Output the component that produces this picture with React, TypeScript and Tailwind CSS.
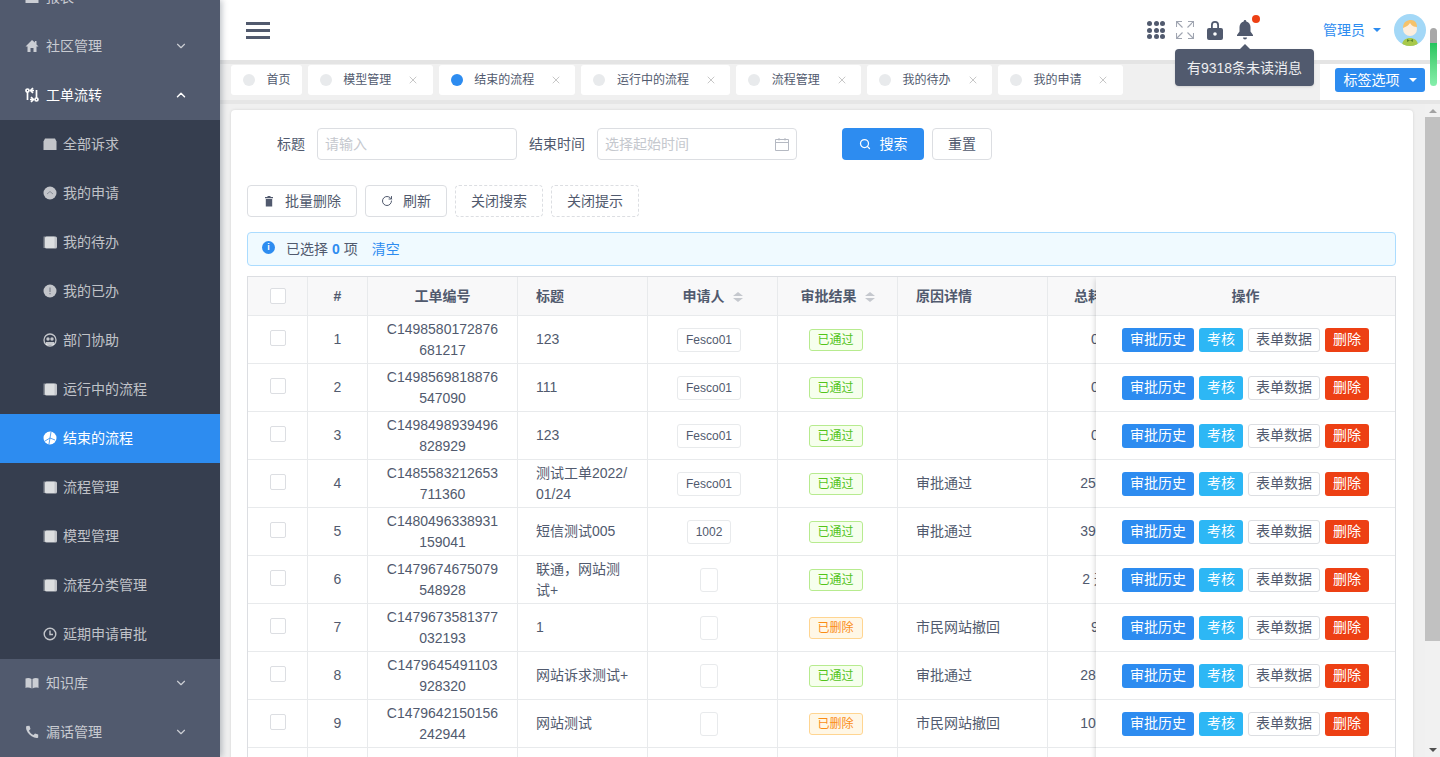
import { ChevronDown, ChevronUp, RotateCw, Search, X } from "lucide-react";
import type { ReactNode } from "react";

const ic = "w-4 h-4 shrink-0";

// sidebar glyphs, all on a 16 grid
const icons: Record<string, ReactNode> = {
  home: <path d="M8 2 1.500 8.500H3.500V14h3v-4h3v4h3V8.500h2l-2-2V3h-1.600v1.600z" />,
  flow: (
    <g fill="none" stroke="currentColor" strokeWidth="1.700">
      <path d="M3.500 5v8M12.500 3v8" />
      <path d="M9 1 6.500 3.500 9 6M6.500 3.500H10M7 10l2.500 2.500L7 15M9.500 12.500H6" />
      <circle cx="3.500" cy="3.500" r="1.500" />
      <circle cx="12.500" cy="12.500" r="1.500" />
    </g>
  ),
  box: <path d="M3 2.500h10l1.500 3V14H1.500V5.500z" />,
  up: (
    <>
      <circle cx="8" cy="8" r="6.500" />
      <path d="m5 9 3-2.500L11 9" fill="none" stroke="#363e4f" strokeWidth=".7" opacity=".6" />
    </>
  ),
  copy: (
    <>
      <path d="M1.500 2.500h11v11.500h-11z" opacity=".6" />
      <rect x="3" y="2.500" width="12" height="12" rx="1.500" />
    </>
  ),
  info: (
    <>
      <circle cx="8" cy="8" r="6.500" />
      <path d="M7.500 4.500h1v4.500h-1zM7.500 10h1v1.200h-1z" fill="#363e4f" opacity=".6" />
    </>
  ),
  team: (
    <>
      <circle cx="8" cy="8" r="6" fill="none" stroke="currentColor" strokeWidth="1.300" />
      <circle cx="6" cy="7" r="1.700" />
      <circle cx="10" cy="7" r="1.700" />
      <path d="M4 13V10h8v3z" />
    </>
  ),
  aperture: (
    <>
      <circle cx="8" cy="8" r="6.500" />
      <path d="M8 8 3 11M8 8l1-6M8 8l5 2M8 8l-1 6" stroke="#2d8cf0" strokeWidth=".8" />
    </>
  ),
  clock: (
    <g fill="none" stroke="currentColor" strokeWidth="1.400">
      <circle cx="8" cy="8" r="5.800" />
      <path d="M8 4.500V8.500H11" />
    </g>
  ),
  book: <path d="M1.500 3.500C3.500 2.500 6 2.800 7.500 4v9.500C6 12.500 3.500 12.300 1.500 13zM14.500 3.500C12.500 2.500 10 2.800 8.500 4v9.500c1.500-1 4-1.200 6-.5z" />,
  phone: <path d="M2.500 2 5.500 1.800 6.500 5 5 6.500c.8 2 2.300 3.500 4.500 4.500L11 9.500l3.200 1v3c-1 .8-2.500.5-4 0C6.500 12.200 3.800 9.500 2.500 6c-.5-1.500-.6-3 0-4z" />,
};

function MenuIcon({ name }: { name: string }) {
  return (
    <svg viewBox="0 0 16 16" fill="currentColor" className={ic}>
      {icons[name]}
    </svg>
  );
}

function TopMenu({ icon, label, open, active, lift }: { icon: string; label: string; open?: boolean; active?: boolean; lift?: boolean }) {
  return (
    <div className={`flex h-[49px] items-center pl-[24px] pr-[32px] text-sm ${lift ? "pb-[2px]" : ""} ${active ? "text-white" : "text-white/70"}`}>
      <MenuIcon name={icon} />
      <span className="ml-[6px] flex-1">{label}</span>
      {open ? <ChevronUp className="w-3.5 h-3.5" strokeWidth={2.500} /> : <ChevronDown className="w-3.5 h-3.5" strokeWidth={2} />}
    </div>
  );
}

const subMenus = [
  ["box", "全部诉求"],
  ["up", "我的申请"],
  ["copy", "我的待办"],
  ["info", "我的已办"],
  ["team", "部门协助"],
  ["copy", "运行中的流程"],
  ["aperture", "结束的流程"],
  ["copy", "流程管理"],
  ["copy", "模型管理"],
  ["copy", "流程分类管理"],
  ["clock", "延期申请审批"],
];

function Sidebar() {
  return (
    <aside className="z-10 h-full w-[220px] shrink-0 overflow-hidden bg-[#515a6e] shadow-[2px_0_6px_rgba(0,21,41,0.25)]">
      <div className="-mt-[28px]">
        <TopMenu icon="box" label="报表" />
        <TopMenu icon="home" label="社区管理" />
        <TopMenu icon="flow" label="工单流转" open active />
        <div className="mt-px bg-[#363e4f]">
          {subMenus.map(([icon, label]) => {
            const on = label === "结束的流程";
            return (
              <div key={label} className={`flex h-[49px] items-center gap-[5px] pb-[2px] pl-[42px] text-sm ${on ? "bg-[#2d8cf0] text-white" : "text-white/70"}`}>
                <MenuIcon name={icon} />
                {label}
              </div>
            );
          })}
        </div>
        <TopMenu icon="book" label="知识库" lift />
        <TopMenu icon="phone" label="漏话管理" lift />
      </div>
    </aside>
  );
}

function Header() {
  return (
    <header className="flex h-[60px] shrink-0 items-center bg-white pl-[26px] text-[#515a6e]">
      <div className="flex w-6 flex-col gap-1">
        <span className="h-[3px] bg-[#515a6e]" />
        <span className="h-[3px] bg-[#515a6e]" />
        <span className="h-[3px] bg-[#515a6e]" />
      </div>
      <div className="ml-auto flex items-center">
        <div className="grid grid-cols-3 gap-[1.500px]">
          {Array.from({ length: 9 }).map((_, i) => (
            <span key={i} className="h-[5px] w-[5px] rounded-full bg-[#515a6e]" />
          ))}
        </div>
        <svg viewBox="0 0 18 18" fill="none" stroke="#a0a5b1" strokeWidth="1.100" className="ml-[11px] h-[18px] w-[18px]">
          <path d="M.5 6V.5H6M12 .5h5.500V6M17.500 12v5.500H12M6 17.500H.5V12M.5.5l6 6M17.500.5l-6 6M17.500 17.500l-6-6M.5 17.500l6-6" />
        </svg>
        <svg viewBox="0 0 16 20" fill="#515a6e" className="ml-[13px] h-5 w-4">
          <path fillRule="evenodd" d="M4 8V5a4 4 0 0 1 8 0v3h2a2 2 0 0 1 2 2v8a2 2 0 0 1-2 2H2a2 2 0 0 1-2-2V10a2 2 0 0 1 2-2zm1.800 0h4.400V5a2.200 2.200 0 0 0-4.400 0zM8 12.200a1.800 1.800 0 1 0 0 3.600 1.800 1.800 0 0 0 0-3.600z" />
        </svg>
        <div className="relative ml-[14px] h-5 w-4">
          <svg viewBox="0 0 16 20" fill="#515a6e" className="h-5 w-4">
            <path d="M8 0c.8 0 1.300.6 1.300 1.400C11.800 2 13.500 4.200 13.500 7v4.500L16 15v1H0v-1l2.500-3.500V7c0-2.800 1.700-5 4.200-5.600C6.700.6 7.200 0 8 0zM6 17.500h4a2 2 0 0 1-4 0z" />
          </svg>
          <span className="absolute -right-[7px] -top-[5px] h-2 w-2 rounded-full bg-[#ed4014]" />
        </div>
        <span className="ml-[70px] text-sm text-[#2d8cf0]">管理员</span>
        <span className="ml-2 h-0 w-0 border-x-[4px] border-t-[4px] border-x-transparent border-t-[#2d8cf0]" />
        <svg viewBox="0 0 32 32" className="ml-[13px] mr-[14px] h-8 w-8">
          <clipPath id="face"><circle cx="16" cy="16" r="16" /></clipPath>
          <g clipPath="url(#face)">
            <rect width="32" height="32" fill="#a3d8f7" />
            <path d="M8 32c0-6 4-8 8-8s8 2 8 8z" fill="#a8c94a" />
            <circle cx="16" cy="15" r="7" fill="#fdeede" />
            <path d="M9 14c0-6 4-8 8-8 4 0 6 3 6 7-3 0-5-1-7-4-1 2-4 4-7 5z" fill="#f5c26b" />
            <path d="M13 25l3 1.500 3-1.500v3l-3-1.500-3 1.500z" fill="#5f8a2b" />
          </g>
        </svg>
      </div>
    </header>
  );
}

const tabs = ["首页", "模型管理", "结束的流程", "运行中的流程", "流程管理", "我的待办", "我的申请"];

function TabBar() {
  return (
    <div className="flex h-[40px] shrink-0 border-t-4 border-[#e4e4e4] bg-[#f0f0f0]">
      <div className="flex h-[36px] flex-1 gap-[6px] pl-[11px] pt-px">
        {tabs.map((t, i) => (
          <div key={t} className="flex h-[30px] items-center rounded-[3px] bg-white pl-3 text-xs text-[#515a6e]">
            <span className={`h-3 w-3 rounded-full ${t === "结束的流程" ? "bg-[#2d8cf0]" : "bg-[#e8eaec]"}`} />
            <span className="ml-[11.5px]">{t}</span>
            {i > 0 ? <X className="ml-4 mr-[13.3px] h-3 w-3 text-[#a8a8a8]" strokeWidth={1.300} /> : <span className="w-[11.3px]" />}
          </div>
        ))}
      </div>
      <div className="flex w-[120px] items-start bg-white pl-[15px] pt-[4px]">
        <button className="flex h-6 w-[90px] items-center justify-center gap-[9px] rounded-[3px] bg-[#2d8cf0] text-sm text-white">
          标签选项
          <span className="h-0 w-0 border-x-[4px] border-t-[4px] border-x-transparent border-t-white" />
        </button>
      </div>
    </div>
  );
}

const fieldCls = "flex h-8 w-[200px] items-center justify-between rounded border border-[#dcdee2] bg-white px-[7px] text-sm text-[#c5c8ce]";

function Filters() {
  return (
    <div className="flex h-8 items-center text-sm text-[#515a6e]">
      <span className="ml-[30px] mr-3">标题</span>
      <div className={fieldCls}>请输入</div>
      <span className="mx-3">结束时间</span>
      <div className={fieldCls}>
        选择起始时间
        <svg viewBox="0 0 14 14" fill="none" stroke="#b5b9c2" className="h-3.5 w-3.5">
          <path d="M.5 2.500h13v11H.5zM.5 5.500h13M4 1v2.500M10 1v2.500" />
        </svg>
      </div>
      <button className="ml-[45px] flex h-8 w-[82px] items-center justify-center gap-[9px] rounded bg-[#2d8cf0] text-white">
        <Search className="h-3 w-3" strokeWidth={2.500} />
        搜索
      </button>
      <button className="ml-2 h-8 w-[60px] rounded border border-[#dcdee2]">重置</button>
    </div>
  );
}

function Toolbar() {
  const dashed = "h-8 w-[88px] rounded border border-dashed border-[#dcdee2] pb-px";
  return (
    <div className="mt-[25px] flex gap-2 text-sm text-[#515a6e]">
      <button className="flex h-8 w-[110px] items-center justify-center gap-[10px] rounded border border-[#dcdee2] pb-px">
        <svg viewBox="0 0 12 12" fill="#515a6e" className="h-3 w-3">
          <path d="M4.500 1h3v1H10v1.200H2V2h2.500zM2.800 4h6.400v7.500H2.800z" />
        </svg>
        批量删除
      </button>
      <button className="flex h-8 w-[82px] items-center justify-center gap-[10px] rounded border border-[#dcdee2] pb-px">
        <RotateCw className="h-3 w-3" strokeWidth={2} />
        刷新
      </button>
      <button className={dashed}>关闭搜索</button>
      <button className={dashed}>关闭提示</button>
    </div>
  );
}

function Notice() {
  return (
    <div className="mt-[15px] flex h-[34px] items-center rounded border border-[#abdcff] bg-[#f0faff] pl-[14px] text-sm text-[#515a6e]">
      <span className="-mt-1 flex h-[13px] w-[13px] items-center justify-center rounded-full bg-[#2d8cf0] text-[9px] font-bold leading-none text-white">i</span>
      <span className="ml-[11px]">已选择</span>
      <span className="mx-1 font-bold text-[#2d8cf0]">0</span>
      <span>项</span>
      <span className="ml-[14px] text-[#2d8cf0]">清空</span>
    </div>
  );
}

const rows = [
  ["C1498580172876681217", "123", "Fesco01", "已通过", "", "0"],
  ["C1498569818876547090", "111", "Fesco01", "已通过", "", "0"],
  ["C1498498939496828929", "123", "Fesco01", "已通过", "", "0"],
  ["C1485583212653711360", "测试工单2022/01/24", "Fesco01", "已通过", "审批通过", "25天"],
  ["C1480496338931159041", "短信测试005", "1002", "已通过", "审批通过", "39天"],
  ["C1479674675079548928", "联通，网站测试+", "", "已通过", "", "2 天"],
  ["C1479673581377032193", "1", "", "已删除", "市民网站撤回", "9"],
  ["C1479645491103928320", "网站诉求测试+", "", "已通过", "审批通过", "28天"],
  ["C1479642150156242944", "网站测试", "", "已删除", "市民网站撤回", "10天"],
  ["C1479410689440", "测试工单联系", "", "已通过", "", "5"],
];

function Check({ row }: { row?: boolean }) {
  return <span className={`relative inline-block h-4 w-4 rounded-[2px] border border-[#dcdee2] bg-white align-middle ${row ? "-top-[2px]" : "-top-px"}`} />;
}

function Sort() {
  return (
    <span className="ml-2 inline-flex flex-col gap-[2px] align-middle">
      <span className="h-0 w-0 border-x-[5px] border-b-[4px] border-x-transparent border-b-[#c5c8ce]" />
      <span className="h-0 w-0 border-x-[5px] border-t-[4px] border-x-transparent border-t-[#c5c8ce]" />
    </span>
  );
}

function Status({ text }: { text: string }) {
  const tone = text === "已通过" ? "border-[#b7eb8f] bg-[#f6ffed] text-[#52c41a]" : "border-[#ffd591] bg-[#fff7e6] text-[#fa8c16]";
  return <span className={`-ml-1 inline-block h-[22px] w-[54px] rounded-[3px] border text-center align-middle text-xs leading-5 ${tone}`}>{text}</span>;
}

function Applicant({ name }: { name: string }) {
  return (
    <span className="-ml-[7px] inline-block h-6 min-w-[18px] rounded-[3px] border border-[#e8eaec] bg-white px-2 align-middle text-xs leading-[23px]">
      {name}
    </span>
  );
}

const th = "border-r border-b border-[#e8eaec] bg-[#f8f8f9] font-bold";
const td = "border-r border-b border-[#e8eaec] px-[18px] leading-[21px]";

function DataTable() {
  return (
    <div className="relative mt-[10px] h-[481px] overflow-hidden border-l border-t border-r border-[#dcdee2] text-sm text-[#515a6e]">
      <table className="w-[1200px] table-fixed border-separate border-spacing-0">
        <colgroup>
          <col className="w-[60px]" />
          <col className="w-[60px]" />
          <col className="w-[150px]" />
          <col className="w-[130px]" />
          <col className="w-[130px]" />
          <col className="w-[120px]" />
          <col className="w-[150px]" />
          <col className="w-[95px]" />
          <col />
        </colgroup>
        <thead>
          <tr className="h-[39px]">
            <th className={th}><Check /></th>
            <th className={th}>#</th>
            <th className={th}>工单编号</th>
            <th className={`${th} px-[18px] text-left`}>标题</th>
            <th className={th}>申请人<Sort /></th>
            <th className={th}>审批结果<Sort /></th>
            <th className={`${th} px-[18px] text-left`}>原因详情</th>
            <th className={`${th} whitespace-nowrap`}>总耗时</th>
            <th className={th} />
          </tr>
        </thead>
        <tbody>
          {rows.map((r, i) => (
            <tr key={r[0]} className="h-[48px]">
              <td className={`${td} text-center`}><Check row /></td>
              <td className={`${td} text-center`}>{i + 1}</td>
              <td className={`${td} break-all text-center`}>{r[0]}</td>
              <td className={`${td} break-all`}>{r[1]}</td>
              <td className={`${td} text-center`}><Applicant name={r[2]} /></td>
              <td className={`${td} text-center`}><Status text={r[3]} /></td>
              <td className={td}>{r[4]}</td>
              <td className={`${td} whitespace-nowrap !px-0 text-center`}>{r[5]}</td>
              <td className={td} />
            </tr>
          ))}
        </tbody>
      </table>
      {/* fixed right column */}
      <div className="absolute right-0 top-0 w-[299px] bg-white shadow-[-2px_0_6px_-2px_rgba(0,0,0,0.2)]">
        <div className={`${th} flex h-[39px] items-center justify-center !border-r-0`}>操作</div>
        {rows.map((r) => (
          <div key={r[0]} className="flex h-[48px] items-center gap-[5px] border-b border-[#e8eaec] pl-[26px]">
            <button className="h-6 w-[72px] rounded-[3px] bg-[#2d8cf0] pb-px text-white">审批历史</button>
            <button className="h-6 w-[44px] rounded-[3px] bg-[#2db7f5] pb-px text-white">考核</button>
            <button className="h-6 w-[72px] rounded-[3px] border border-[#dcdee2] bg-white pb-px">表单数据</button>
            <button className="h-6 w-[44px] rounded-[3px] bg-[#ed4014] pb-px text-white">删除</button>
          </div>
        ))}
      </div>
    </div>
  );
}

function Scrollbar() {
  return (
    <div className="flex w-[15px] shrink-0 flex-col items-center bg-[#f1f1f1]">
      <span className="mt-[5px] h-0 w-0 border-x-[4px] border-b-[4px] border-x-transparent border-b-[#a3a3a3]" />
      <span className="mt-[4px] h-[524px] w-full bg-[#c1c1c1]" />
      <span className="mt-auto mb-[5px] h-0 w-0 border-x-[4px] border-t-[4px] border-x-transparent border-t-[#505050]" />
    </div>
  );
}

export default function App() {
  return (
    <div className="relative flex h-[757px] w-[1440px] overflow-hidden bg-[#f0f0f0] font-['Liberation_Sans','Noto_Sans_CJK_SC',sans-serif]">
      <Sidebar />
      <div className="flex min-w-0 flex-1 flex-col">
        <Header />
        <TabBar />
        <div className="flex min-h-0 flex-1 border-t-4 border-[#e6e6e6]">
          <main className="min-w-0 flex-1 pl-[11px] pr-[12px] pt-[6px]">
            <div className="h-[700px] rounded bg-white pl-4 pr-[17px] pt-[18px] shadow-[0_0_3px_rgba(0,0,0,0.12)]">
              <Filters />
              <Toolbar />
              <Notice />
              <DataTable />
            </div>
          </main>
          <Scrollbar />
        </div>
      </div>

      {/* tooltip under the bell */}
      <div className="absolute left-[1175px] top-[49px] z-20 flex h-[37px] w-[139px] items-center justify-center rounded bg-[#515a6e] text-sm text-white/90 shadow">
        <span className="absolute -top-[5px] left-[65px] h-0 w-0 border-x-[5px] border-b-[5px] border-x-transparent border-b-[#515a6e]" />
        有9318条未读消息
      </div>

      {/* little floating scroller top right */}
      <div className="absolute left-[1430px] top-[28px] z-20 flex h-[58px] w-[7px] flex-col overflow-hidden rounded-full">
        <span className="h-[15px] bg-[#a8a8a8]" />
        <span className="flex-1 bg-gradient-to-b from-[#22c55e] to-[#86efac]" />
      </div>
    </div>
  );
}
